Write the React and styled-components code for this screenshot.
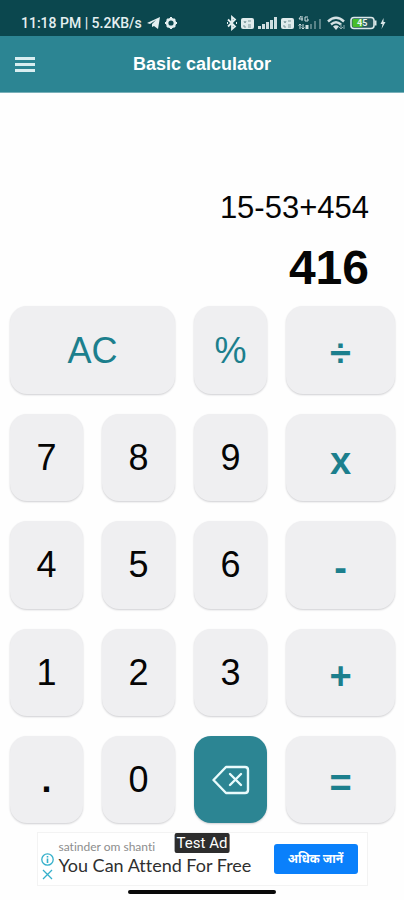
import React from "react";
import styled, { createGlobalStyle } from "styled-components";

const teal = "#2c8593";
const ink = "#1c7f8d";

const GlobalStyle = createGlobalStyle`
  * { box-sizing: border-box; }
  body { margin: 0; background: #fefefe; font-family: "Liberation Sans", Arial, sans-serif; }
  button { border: 0; padding: 0; font: inherit; cursor: pointer; }
`;

const Screen = styled.div`
  display: flex;
  flex-direction: column;
`;

const StatusBar = styled.div`
  display: flex;
  align-items: flex-end;
  justify-content: space-between;
  height: 36px;
  padding: 0 18px 4px 21px;
  background: #0b474e;
  color: #e4eff0;
  font: 500 14px/18px Roboto, sans-serif;
`;

const StatusGroup = styled.div`
  display: flex;
  align-items: center;
  gap: ${(p) => p.$gap}px;
  height: 18px;
  svg { display: block; }
`;

const Header = styled.header`
  display: grid;
  grid-template-columns: 50px 1fr 50px;
  align-items: center;
  height: 57px;
  background: ${teal};
  border-bottom: 1px solid #79b0b9;
`;

const MenuButton = styled.button`
  display: flex;
  justify-content: center;
  background: none;
`;

const Title = styled.h1`
  margin: 0;
  color: #fff;
  font-size: 18px;
  line-height: 24px;
  font-weight: 700;
  text-align: center;
`;

const Display = styled.section`
  display: flex;
  flex-direction: column;
  align-items: flex-end;
  justify-content: flex-end;
  height: 213px;
  padding: 0 35px 10px;
  color: #050505;
`;

const Expression = styled.div`
  font-size: 31px;
  line-height: 40px;
  margin-bottom: 12px;
`;

const Result = styled.output`
  font-size: 48px;
  line-height: 56px;
  font-weight: 700;
`;

const Keypad = styled.main`
  display: grid;
  grid-template-columns: 73fr 73fr 73fr 109fr;
  grid-template-rows: 88px 87px 88px 87px 87px;
  gap: 20px 19px;
  padding: 0 9px 0 10px;
`;

const Key = styled.button`
  display: flex;
  align-items: center;
  justify-content: center;
  border-radius: 17px;
  background: #efeff1;
  box-shadow: 0 1px 2px #cfcfd2;
  color: #050505;
  font-size: 36px;
  line-height: 40px;
`;

const PercentKey = styled(Key)`
  padding-top: 2px;
  color: ${ink};
`;

const WideKey = styled(PercentKey)`
  grid-column: span 2;
`;

const OperatorKey = styled(Key)`
  padding-top: 6px;
  color: ${ink};
  font-size: 38px;
  font-weight: 700;
`;

const DotKey = styled(Key)`
  font-weight: 700;
`;

const DeleteKey = styled(Key)`
  background: ${teal};
`;

const AdBanner = styled.aside`
  position: relative;
  display: flex;
  align-items: center;
  width: calc(100% - 73px);
  height: 54px;
  margin: 9px auto 0;
  padding: 0 9px 0 3px;
  border: 1px solid #f3f3f3;
  background: #fff;
`;

const AdControls = styled.div`
  display: flex;
  flex-direction: column;
  gap: 2px;
  padding-top: 16px;
  margin-right: 5px;
`;

const AdControl = styled.button`
  display: flex;
  justify-content: center;
  background: none;
`;

const AdCopy = styled.div`
  flex: 1;
  padding-bottom: 4px;
  white-space: nowrap;
  font-family: Lato, sans-serif;
  font-variant-ligatures: none;
`;

const Advertiser = styled.div`
  color: #8d8d8d;
  font-size: 12px;
  line-height: 16px;
`;

const AdHeadline = styled.div`
  color: #2f2f2f;
  font-size: 18px;
  line-height: 20px;
`;

const AdAction = styled.button`
  width: 84px;
  height: 30px;
  border-radius: 3px;
  background: #0a80fb;
  color: #fff;
  font: 700 12px/20px "Noto Sans", "Noto Sans Devanagari", sans-serif;
`;

const TestBadge = styled.span`
  position: absolute;
  top: 0;
  left: 50%;
  transform: translateX(-50%);
  padding: 0 2px;
  border-radius: 2px;
  background: #2d2d2d;
  color: #fff;
  font: 400 15px/20px Roboto, sans-serif;
  white-space: nowrap;
`;

const HomeIndicator = styled.div`
  width: 148px;
  height: 4px;
  margin: 4px auto 6px;
  border-radius: 2px;
  background: #090909;
`;

const Signal = ({ levels }) => (
  <svg width="19" height="14" viewBox="0 0 19 14" fill="#cfdee0">
    {[3, 5, 7, 9, 12].map((h, i) => (
      <rect key={h} x={i * 4} y={13 - h} width="3" height={h} opacity={i < levels ? 1 : 0.4} />
    ))}
  </svg>
);

const Volte = () => (
  <svg width="13" height="13" viewBox="0 0 13 13">
    <rect y="1" width="13" height="11" rx="2" fill="#e0ebec" />
    <path d="M3 4l1 2 1-2M7 4h3M3 8v2h2M7 8h3M7 10h3" stroke="#7b979b" fill="none" />
  </svg>
);

const keys = ["7", "8", "9", "x", "4", "5", "6", "-", "1", "2", "3", "+"];

export default function App() {
  return (
    <Screen>
      <GlobalStyle />
      <StatusBar>
        <StatusGroup $gap={5}>
          <span>11:18 PM | 5.2KB/s</span>
          <svg width="13" height="12" viewBox="0 0 13 12" fill="#e4eff0">
            <path d="M0 6L13 0L11 12L7 9L5 10V7L9 3L3 7Z" />
          </svg>
          <svg width="12" height="12" viewBox="0 0 12 12" fill="none" stroke="#e4eff0">
            <circle cx="6" cy="6" r="3.9" strokeWidth="2.600" />
            <path d="M6 0v2M6 10v2M0 6h2M10 6h2M2 2l1 1M9 9l1 1M10 2l-1 1M3 9l-1 1" strokeWidth="2" />
          </svg>
        </StatusGroup>
        <StatusGroup $gap={4}>
          <svg width="10" height="16" viewBox="0 0 10 16" fill="none" stroke="#e4eff0" strokeWidth="1.8">
            <path d="M1 4.500l7 7L5 14V2L8 4.500l-7 7M0 8h1M9 8h1" />
          </svg>
          <Volte />
          <Signal levels={5} />
          <Volte />
          <svg width="25" height="16" viewBox="0 0 25 16" fill="none" stroke="#cfdee0">
            <path d="M3 1L1 4h4M4 1v5M10 2H7v4h3V4H9" />
            <path d="M2 14V9M0.500 10.500L2 9l1.500 1.500M5 9v5M3.500 12.500L5 14l1.500-1.500" />
            <path d="M9 14v-4" strokeWidth="3" />
            <path d="M13 14V9M17 14V6M22 14V4" strokeWidth="2" opacity="0.4" />
          </svg>
          <svg width="19" height="15" viewBox="0 0 19 15" fill="none" stroke="#d5e2e4" strokeWidth="2.400">
            <path d="M1 5.500Q9 -2 17 5.500M4 8.500Q9 4 14 8.500" />
            <path d="M6 10.500Q9 8 12 10.500L9 14Z" fill="#d5e2e4" stroke="none" />
            <path d="M14 8v5M12 11l2 2 2-2M17 13V9" stroke="#8fadb1" strokeWidth="1" />
          </svg>
          <svg width="36" height="14" viewBox="0 0 36 14">
            <rect x="1" y="1.500" width="23" height="11" rx="3" fill="#23575d" stroke="#dce8e9" strokeWidth="1.600" />
            <rect x="2.500" y="3" width="10" height="8" rx="1" fill="#48bd2a" />
            <path d="M25.500 4.500v5" stroke="#dce8e9" strokeWidth="2" />
            <text x="7" y="10" fill="#e9f3ee" fontFamily="Roboto, sans-serif" fontSize="9" fontWeight="700">45</text>
            <path d="M33.500 2l-3 6h2l-1 5 4-7h-2z" fill="#dce8e9" />
          </svg>
        </StatusGroup>
      </StatusBar>
      <Header>
        <MenuButton aria-label="Open menu">
          <svg width="20" height="16" viewBox="0 0 20 16" stroke="#d9eef1" strokeWidth="3">
            <path d="M0 2.500h20M0 8.500h20M0 14.500h20" />
          </svg>
        </MenuButton>
        <Title>Basic calculator</Title>
      </Header>
      <Display>
        <Expression>15-53+454</Expression>
        <Result>416</Result>
      </Display>
      <Keypad>
        <WideKey>AC</WideKey>
        <PercentKey>%</PercentKey>
        <OperatorKey>÷</OperatorKey>
        {keys.map((label, i) =>
          i % 4 === 3 ? <OperatorKey key={label}>{label}</OperatorKey> : <Key key={label}>{label}</Key>
        )}
        <DotKey>.</DotKey>
        <Key>0</Key>
        <DeleteKey aria-label="Delete">
          <svg width="38" height="30" viewBox="0 0 38 30" fill="none" stroke="#e9fbfc" strokeWidth="2.400" strokeLinejoin="round" strokeLinecap="round">
            <path d="M14 2H33Q36 2 36 5V25Q36 28 33 28H14L1.500 15Z" />
            <path d="M18 9L29 20M29 9L18 20" />
          </svg>
        </DeleteKey>
        <OperatorKey>=</OperatorKey>
      </Keypad>
      <AdBanner>
        <AdControls>
          <AdControl aria-label="About this ad">
            <svg width="13" height="13" viewBox="0 0 13 13" fill="none" stroke="#35b0cb" strokeWidth="1.300">
              <circle cx="6.500" cy="6.500" r="5.700" />
              <path d="M6.500 3v1.500M6.500 5.500V10" strokeWidth="1.600" />
            </svg>
          </AdControl>
          <AdControl aria-label="Close ad">
            <svg width="13" height="13" viewBox="0 0 13 13" stroke="#35b0cb" strokeWidth="1.300">
              <path d="M2 2l9 9M11 2l-9 9" />
            </svg>
          </AdControl>
        </AdControls>
        <AdCopy>
          <Advertiser>satinder om shanti</Advertiser>
          <AdHeadline>You Can Attend For Free</AdHeadline>
        </AdCopy>
        <AdAction>अधिक जानें</AdAction>
        <TestBadge>Test Ad</TestBadge>
      </AdBanner>
      <HomeIndicator />
    </Screen>
  );
}
